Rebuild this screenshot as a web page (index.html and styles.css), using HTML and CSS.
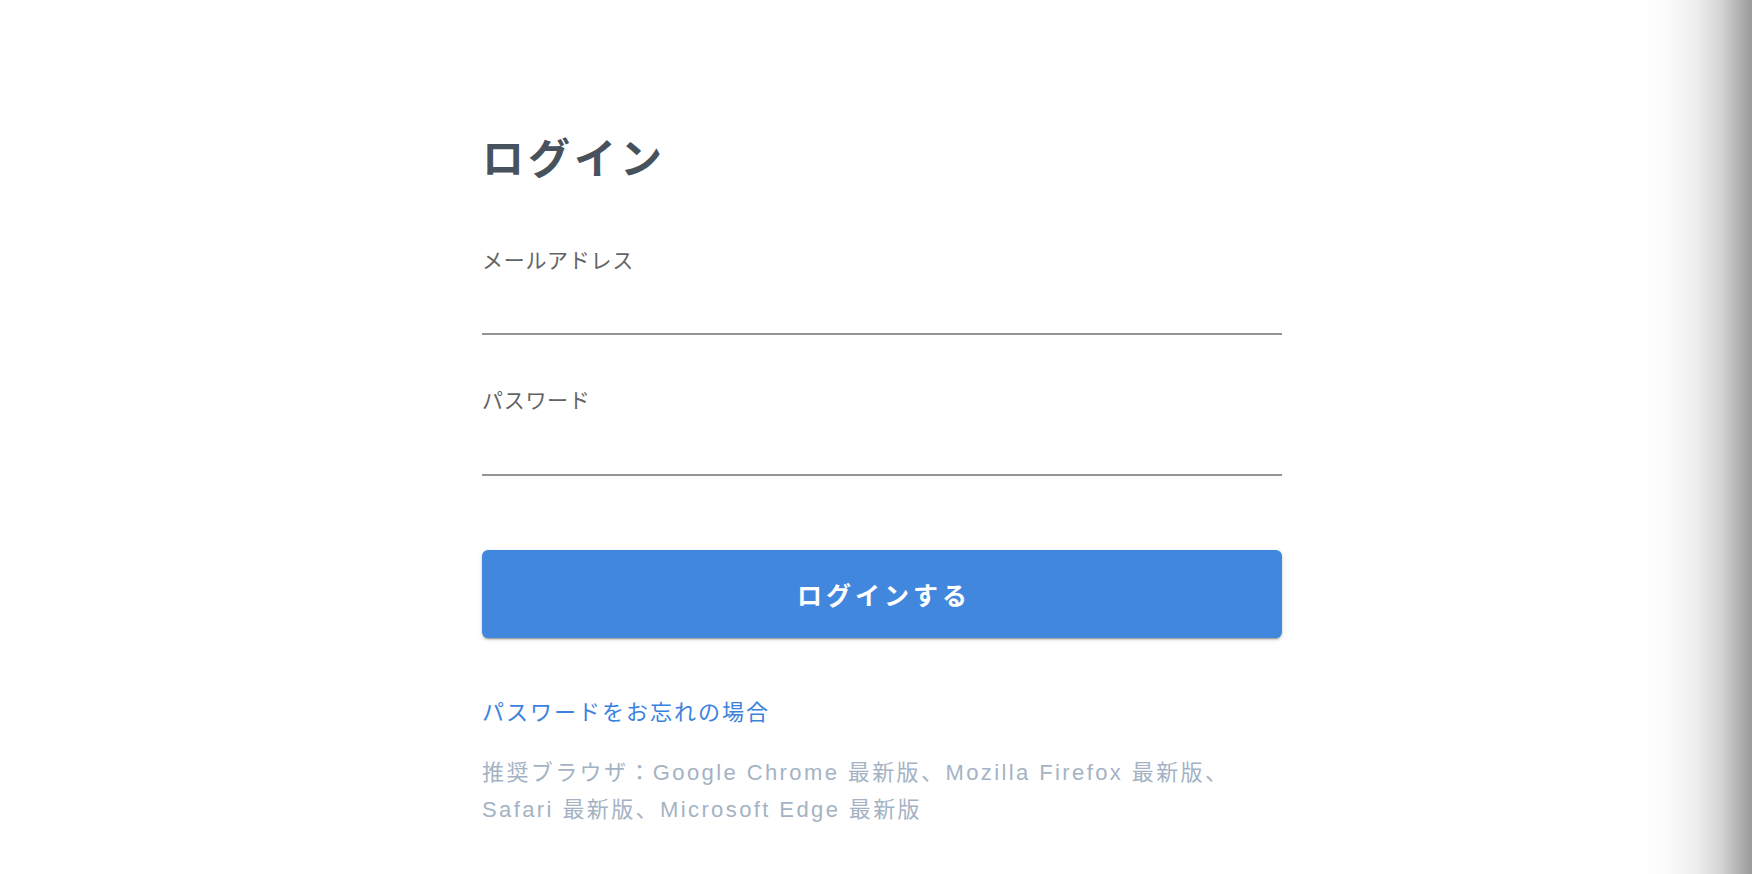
FILE: index.html
```html
<!DOCTYPE html>
<html lang="ja">
<head>
<meta charset="utf-8">
<title>ログイン</title>
<link rel="stylesheet" href="styles.css">
</head>
<body>
<div class="page">
  <main class="login">
    <h1 class="title">ログイン</h1>
    <form class="form">
      <label class="field">
        <span class="label">メールアドレス</span>
        <input class="input input-email" type="email">
      </label>
      <label class="field field-pw">
        <span class="label">パスワード</span>
        <input class="input input-pw" type="password">
      </label>
      <button class="btn" type="button">ログインする</button>
    </form>
    <a class="forgot" href="#">パスワードをお忘れの場合</a>
    <p class="note">推奨ブラウザ：Google Chrome 最新版、Mozilla Firefox 最新版、Safari 最新版、Microsoft Edge 最新版</p>
  </main>
</div>
<div class="edge-shadow"></div>
</body>
</html>
```

FILE: styles.css
```css
html, body {
  margin: 0;
  padding: 0;
  background: #ffffff;
  height: 100%;
  overflow: hidden;
}
body {
  font-family: "Liberation Sans", "Noto Sans CJK JP", sans-serif;
  text-spacing-trim: space-all;
}
.page {
  display: flex;
  justify-content: center;
  padding: 135px 0 0 12px;
}
.login {
  width: 800px;
  display: flex;
  flex-direction: column;
}
.title {
  margin: 0;
  font-family: "Noto Sans CJK JP", sans-serif;
  font-size: 42px;
  line-height: 42px;
  font-weight: 700;
  color: #47525d;
  letter-spacing: 4px;
}
.form {
  display: flex;
  flex-direction: column;
  margin-top: 70px;
}
.field {
  display: flex;
  flex-direction: column;
}
.field-pw {
  margin-top: 52px;
}
.label {
  font-family: "Noto Sans CJK JP", sans-serif;
  font-size: 21px;
  line-height: 24px;
  color: #646464;
  letter-spacing: 0.7px;
}
.input {
  box-sizing: border-box;
  height: 64px;
  border: none;
  border-bottom: 2px solid #959595;
  outline: none;
  background: transparent;
  padding: 0;
  font-size: 20px;
}
.input-pw {
  height: 65px;
}
.btn {
  margin-top: 74px;
  height: 88px;
  border: none;
  border-radius: 6px;
  background: #4287de;
  color: #ffffff;
  font-family: "Noto Sans CJK JP", sans-serif;
  font-size: 25px;
  font-weight: 700;
  letter-spacing: 4px;
  padding: 0 0 0 4px;
  box-shadow: 0 3px 1px -2px rgba(0,0,0,.2), 0 2px 2px 0 rgba(0,0,0,.14), 0 1px 5px 0 rgba(0,0,0,.12);
  cursor: pointer;
}
.forgot {
  margin-top: 60px;
  align-self: flex-start;
  font-family: "Noto Sans CJK JP", sans-serif;
  font-size: 22px;
  line-height: 24px;
  color: #3b82df;
  text-decoration: none;
  letter-spacing: 2px;
}
.note {
  margin: 32px 0 0 0;
  font-size: 22px;
  line-height: 37px;
  color: #a4b3c3;
  letter-spacing: 2.4px;
}
.edge-shadow {
  position: fixed;
  top: 0;
  right: 0;
  width: 110px;
  height: 100%;
  pointer-events: none;
  background: linear-gradient(to right,
    rgba(0,0,0,0) 0%,
    rgba(0,0,0,0.02) 25%,
    rgba(0,0,0,0.07) 50%,
    rgba(0,0,0,0.17) 72%,
    rgba(0,0,0,0.30) 88%,
    rgba(0,0,0,0.40) 100%);
}
```
